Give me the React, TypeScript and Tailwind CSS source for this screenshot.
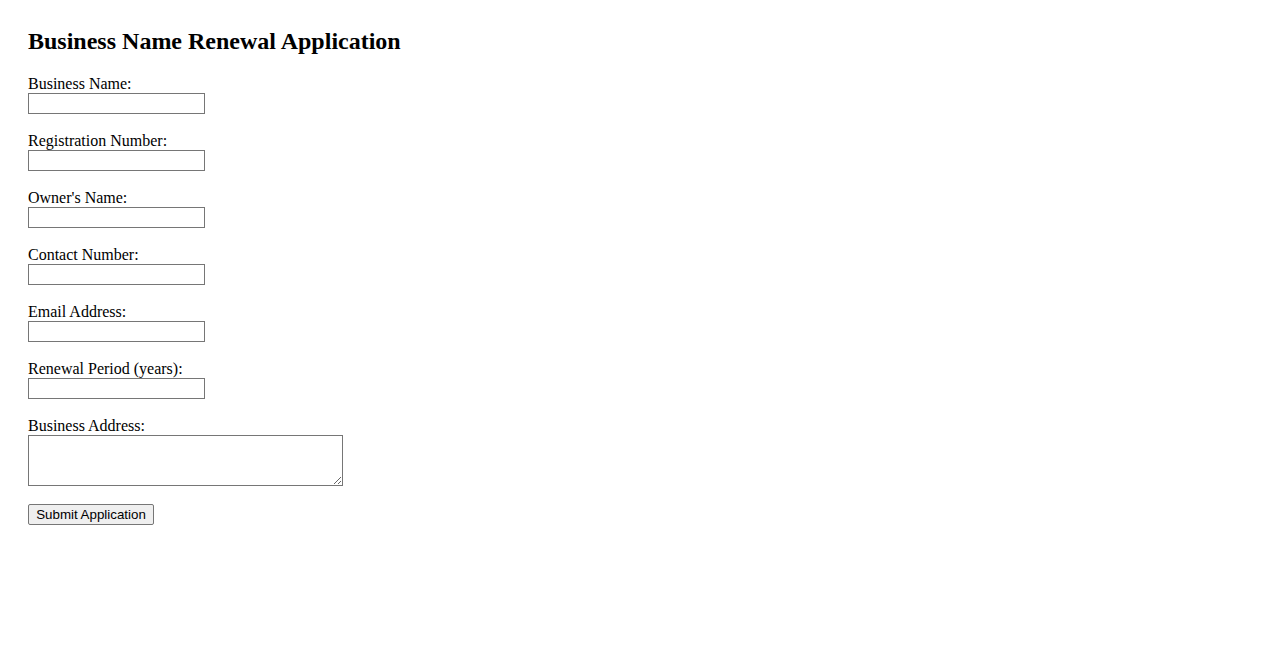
const fields = [
  { id: 'businessName', label: 'Business Name:' },
  { id: 'registrationNumber', label: 'Registration Number:' },
  { id: 'ownerName', label: "Owner's Name:" },
  { id: 'contactNumber', label: 'Contact Number:' },
  { id: 'email', label: 'Email Address:' },
  { id: 'renewalPeriod', label: 'Renewal Period (years):' },
]

export default function App() {
  return (
    <div className="min-h-screen bg-white pl-[28px] pt-[28px] text-black" style={{ fontFamily: '"Liberation Serif", "Times New Roman", serif' }}>
      <h2 className="mb-[20px] text-[24px] font-bold leading-[27px]">Business Name Renewal Application</h2>
      <form className="flex flex-col items-start" onSubmit={(e) => e.preventDefault()}>
        {fields.map((f) => (
          <div key={f.id} className="mb-[18px] flex flex-col items-start">
            <label htmlFor={f.id} className="block text-[16px] leading-[18px]">
              {f.label}
            </label>
            <input
              id={f.id}
              type="text"
              className="h-[21px] w-[177px] border border-[#767676] bg-white px-[2px] text-[13.33px] outline-none"
              style={{ fontFamily: '"Liberation Sans", Arial, sans-serif' }}
            />
          </div>
        ))}
        <div className="mb-[18px] flex flex-col items-start">
          <label htmlFor="address" className="block text-[16px] leading-[18px]">
            Business Address:
          </label>
          <textarea
            id="address"
            className="h-[51px] w-[315px] border border-[#767676] bg-white px-[2px] text-[13.33px] outline-none"
            style={{ fontFamily: '"Liberation Mono", monospace' }}
          />
        </div>
        <button
          type="submit"
          className="h-[21px] w-[126px] rounded-[2px] border border-[#767676] bg-[#efefef] px-[6px] text-[13.33px] leading-[15px] text-black"
          style={{ fontFamily: '"Liberation Sans", Arial, sans-serif' }}
        >
          Submit Application
        </button>
      </form>
    </div>
  )
}
